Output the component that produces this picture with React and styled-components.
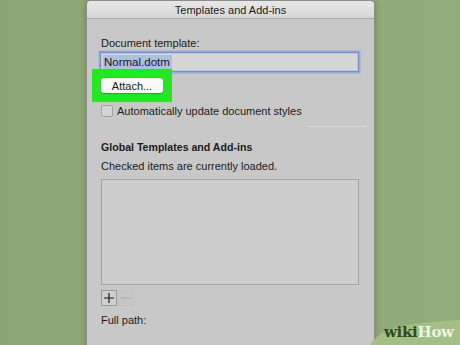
import React from "react";
import styled, { createGlobalStyle } from "styled-components";

const Global = createGlobalStyle`
  html, body {
    margin: 0;
    padding: 0;
    height: 100%;
    overflow: hidden;
  }
  body {
    background: #8fa877;
    font-family: "Liberation Sans", Arial, sans-serif;
  }
`;

const Stage = styled.div`
  position: relative;
  width: 460px;
  height: 345px;
  overflow: hidden;
  background: linear-gradient(90deg, #8da675 0%, #90a979 60%, #93ac7c 100%);
`;

const Dialog = styled.div`
  width: 287px;
  height: 360px;
  margin-left: 86px;
  border: 1px solid #8c8c8c;
  border-bottom: none;
  border-radius: 5px 5px 0 0;
  background: #c8c8c8;
  box-shadow: 0 0 6px rgba(40, 60, 30, 0.35);
  display: flex;
  flex-direction: column;
  overflow: hidden;
`;

const TitleBar = styled.div`
  height: 17px;
  flex: none;
  border-bottom: 1px solid #a9a9a9;
  background: linear-gradient(#e7e7e7, #d7d7d7);
  display: flex;
  align-items: center;
  justify-content: center;
  font-size: 11px;
  color: #222;
`;

const Body = styled.div`
  display: flex;
  flex-direction: column;
  padding: 17px 15px 0 14px;
  color: #1c1c1c;
  font-size: 11px;
`;

const Label = styled.div`
  height: 14px;
  line-height: 14px;
  font-weight: ${(p) => (p.$bold ? 700 : 400)};
  font-size: ${(p) => (p.$bold ? "10.6px" : "11px")};
  margin-top: ${(p) => p.$top || 0}px;
  white-space: nowrap;
`;

const Input = styled.div`
  box-sizing: border-box;
  height: 20px;
  width: 259px;
  margin: 2px 0 0 -1px;
  border: 1px solid #7b8fc4;
  box-shadow: 0 0 0 1.5px #93a9dc, inset 0 0 0 1px #b9c6e0;
  background: #d6d6d6;
  display: flex;
  align-items: center;
  padding-left: 2px;
`;

const Selected = styled.span`
  background: #aebfdc;
  padding: 0 2px 0 1px;
  line-height: 15px;
  font-size: 11.5px;
  color: #15172a;
`;

const Highlight = styled.div`
  position: relative;
  align-self: flex-start;
  margin: -3px 0 0 -9px;
  padding: 9px;
  background: #25e524;
`;

const Button = styled.div`
  box-sizing: border-box;
  width: 62px;
  height: 15px;
  background: #fafafa;
  border-radius: 3px;
  box-shadow: 0 0.5px 1px rgba(0, 0, 0, 0.25);
  display: flex;
  align-items: center;
  justify-content: center;
  font-size: 11px;
  color: #1a1a1a;
`;

const CheckRow = styled.div`
  display: flex;
  align-items: center;
  gap: 4px;
  margin-top: 3px;
  height: 12px;
`;

const Box = styled.div`
  box-sizing: border-box;
  width: 12px;
  height: 12px;
  border: 1px solid #a4a4a4;
  border-radius: 2px;
  background: #d4d4d4;
`;

const Rule = styled.div`
  align-self: flex-end;
  width: 60px;
  height: 1px;
  margin: 9px -8px 0 0;
  background: #d9d9d9;
`;

const List = styled.div`
  box-sizing: border-box;
  width: 258px;
  height: 106px;
  margin-top: 6px;
  border: 1px solid #a2a2a2;
  background: #cdcdcd;
`;

const Tools = styled.div`
  display: flex;
  margin-top: 5px;
`;

const ToolButton = styled.div`
  box-sizing: border-box;
  width: 16px;
  height: 16px;
  border: 1px solid ${(p) => (p.$dim ? "#c2c2c2" : "#9a9a9a")};
  background: ${(p) => (p.$dim ? "#c6c6c6" : "#cfcfcf")};
  display: flex;
  align-items: center;
  justify-content: center;
  margin-right: 1px;
`;

const Watermark = styled.svg`
  position: absolute;
  right: 0;
  bottom: 0;
`;

const Logo = styled.div`
  position: absolute;
  left: 384px;
  top: 323px;
  font-family: "DejaVu Serif", "Liberation Serif", serif;
  font-weight: 700;
  font-size: 15px;
  letter-spacing: -0.3px;
  color: #2f4a22;

  span {
    color: #eef3e6;
  }
`;

export default function App() {
  return (
    <>
      <Global />
      <Stage>
        <Dialog>
          <TitleBar>Templates and Add-ins</TitleBar>
          <Body>
            <Label>Document template:</Label>
            <Input>
              <Selected>Normal.dotm</Selected>
            </Input>
            <Highlight>
              <Button>Attach...</Button>
            </Highlight>
            <CheckRow>
              <Box />
              <Label>Automatically update document styles</Label>
            </CheckRow>
            <Rule />
            <Label $bold $top={13}>
              Global Templates and Add-ins
            </Label>
            <Label $top={5}>Checked items are currently loaded.</Label>
            <List />
            <Tools>
              <ToolButton>
                <svg width="12" height="12" viewBox="0 0 12 12">
                  <path d="M6 1v10M1 6h10" stroke="#1a1a1a" strokeWidth="1.2" />
                </svg>
              </ToolButton>
              <ToolButton $dim>
                <svg width="12" height="12" viewBox="0 0 12 12">
                  <path d="M1 6h10" stroke="#a9a9a9" strokeWidth="1.2" />
                </svg>
              </ToolButton>
            </Tools>
            <Label $top={7}>Full path:</Label>
          </Body>
        </Dialog>
        <Watermark width="90" height="30" viewBox="0 0 90 30">
          <path d="M0 30 C10 14 30 8 90 5 L90 30 Z" fill="#a3bf86" />
        </Watermark>
        <Logo>
          wiki<span>How</span>
        </Logo>
      </Stage>
    </>
  );
}
